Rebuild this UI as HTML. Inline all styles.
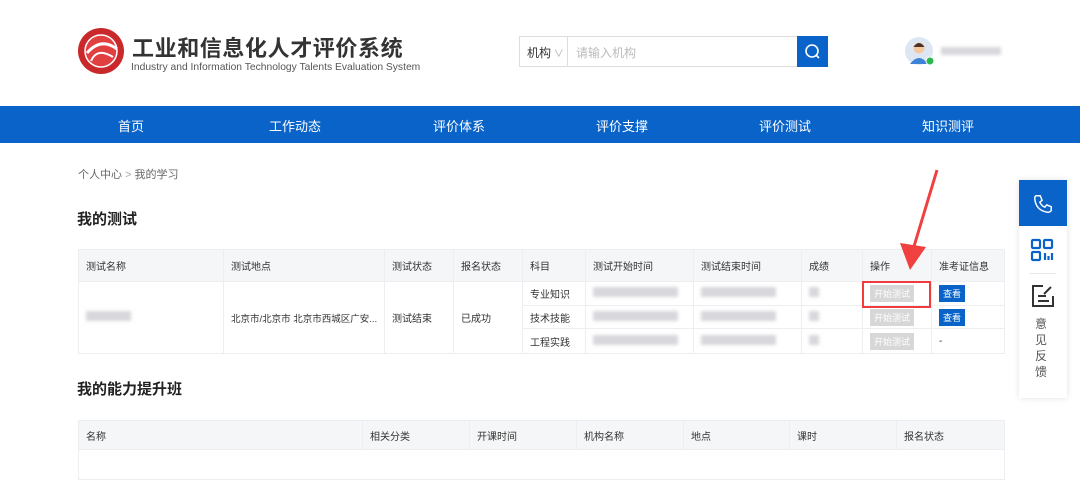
<!DOCTYPE html>
<html><head><meta charset="utf-8"><style>
*{margin:0;padding:0;box-sizing:border-box}
body{width:1080px;height:466px;overflow:hidden;background:#fff;font-family:"Liberation Sans","Noto Sans CJK SC",sans-serif;color:#333;position:relative}
.a{position:absolute}
.nav{top:106px;left:0;width:1080px;height:37px;background:#0a63c9}
.nav span{position:absolute;top:10px;color:#fff;font-size:13px;transform:translateX(-50%)}
table{border-collapse:collapse;font-size:10px;color:#333;table-layout:fixed}
td{border:1px solid #eceef2;padding-left:7px;white-space:nowrap;overflow:hidden}
th{border:1px solid #eceef2;background:#f5f6f8;text-align:left;padding-left:7px;font-weight:normal}
.blur{display:inline-block;background:#d8d8dc;filter:blur(1.5px);height:10px}
.btn{display:inline-block;background:#d7d7d7;color:#fff;font-size:9px;padding:2px 4px}
.bb{display:inline-block;background:#0a63c9;color:#fff;font-size:9px;padding:2px 4px}
</style></head><body>
<svg class="a" style="left:77px;top:27px" width="48" height="48" viewBox="0 0 48 48"><circle cx="24" cy="24" r="23" fill="#c9292b"/><circle cx="24" cy="24" r="16" fill="#e14040" stroke="#fff" stroke-width="1.5"/><path d="M10 26 Q24 10 40 22" stroke="#fff" stroke-width="3" fill="none"/><path d="M14 34 Q20 20 36 30" stroke="#fff" stroke-width="2" fill="none"/></svg>
<div class="a" style="left:132px;top:31px;font-size:22px;font-weight:bold;color:#333;letter-spacing:0.6px;white-space:nowrap">工业和信息化人才评价系统</div>
<div class="a" style="left:131px;top:62px;font-size:10.3px;color:#555;white-space:nowrap">Industry and Information Technology Talents Evaluation System</div>
<div class="a" style="left:519px;top:36px;width:280px;height:31px;border:1px solid #ddd"></div>
<div class="a" style="left:527px;top:44px;font-size:12px;color:#333">机构<span style="color:#aaa;font-size:10px"> ∨</span></div>
<div class="a" style="left:567px;top:37px;width:1px;height:29px;background:#ddd"></div>
<div class="a" style="left:576px;top:44px;font-size:12px;color:#bbb">请输入机构</div>
<div class="a" style="left:797px;top:36px;width:31px;height:31px;background:#0a63c9"></div>
<svg class="a" style="left:804px;top:43px" width="17" height="17"><circle cx="8" cy="8" r="6" stroke="#fff" stroke-width="1.6" fill="none"/><path d="M12 12l3 3" stroke="#fff" stroke-width="1.6"/></svg>
<svg class="a" style="left:905px;top:37px" width="30" height="30"><circle cx="14" cy="14" r="14" fill="#dde7f3"/><circle cx="14" cy="11" r="5.5" fill="#f5c9a0"/><path d="M8.5 10 Q14 2 19.5 10Z" fill="#4a3326"/><path d="M5 27 Q14 15 23 27Z" fill="#3c82d6"/><circle cx="25" cy="24" r="4" fill="#2db84d" stroke="#fff"/></svg>
<div class="a blur" style="left:941px;top:47px;width:60px;height:8px"></div>
<div class="a nav"><span style="left:131px">首页</span><span style="left:295px">工作动态</span><span style="left:459px">评价体系</span><span style="left:622px">评价支撑</span><span style="left:785px">评价测试</span><span style="left:948px">知识测评</span></div>
<div class="a" style="left:78px;top:166px;font-size:11px;color:#666">个人中心 <span style="color:#aaa">&gt;</span> 我的学习</div>
<div class="a" style="left:77px;top:208px;font-size:15px;font-weight:bold;color:#222">我的测试</div>
<table class="a" style="left:78px;top:249px;width:927px">
<tr style="height:32px"><th style="width:145px">测试名称</th><th style="width:161px">测试地点</th><th style="width:69px">测试状态</th><th style="width:69px">报名状态</th><th style="width:63px">科目</th><th style="width:108px">测试开始时间</th><th style="width:108px">测试结束时间</th><th style="width:61px">成绩</th><th style="width:69px">操作</th><th>准考证信息</th></tr>
<tr style="height:24px"><td rowspan="3"><span class="blur" style="width:45px"></span></td><td rowspan="3" style="font-size:9.5px">北京市/北京市 北京市西城区广安...</td><td rowspan="3">测试结束</td><td rowspan="3">已成功</td><td>专业知识</td><td><span class="blur" style="width:85px"></span></td><td><span class="blur" style="width:75px"></span></td><td><span class="blur" style="width:10px"></span></td><td><span class="btn">开始测试</span></td><td><span class="bb">查看</span></td></tr>
<tr style="height:23px"><td>技术技能</td><td><span class="blur" style="width:85px"></span></td><td><span class="blur" style="width:75px"></span></td><td><span class="blur" style="width:10px"></span></td><td><span class="btn">开始测试</span></td><td><span class="bb">查看</span></td></tr>
<tr style="height:25px"><td>工程实践</td><td><span class="blur" style="width:85px"></span></td><td><span class="blur" style="width:75px"></span></td><td><span class="blur" style="width:10px"></span></td><td><span class="btn">开始测试</span></td><td>-</td></tr>
</table>
<div class="a" style="left:862px;top:281px;width:69px;height:27px;border:2px solid #f03c3c"></div>
<svg class="a" style="left:890px;top:165px" width="55" height="110"><path d="M47 5 L22 88" stroke="#f04040" stroke-width="3"/><path d="M10 78 L20 105 L36 82Z" fill="#f04040"/></svg>
<div class="a" style="left:77px;top:378px;font-size:15px;font-weight:bold;color:#222">我的能力提升班</div>
<table class="a" style="left:78px;top:420px;width:927px">
<tr style="height:29px"><th style="width:284px">名称</th><th style="width:107px">相关分类</th><th style="width:107px">开课时间</th><th style="width:107px">机构名称</th><th style="width:106px">地点</th><th style="width:107px">课时</th><th>报名状态</th></tr>
<tr style="height:30px"><td colspan="7"></td></tr>
</table>
<div class="a" style="left:1019px;top:180px;width:48px;height:218px;background:#fff;box-shadow:0 0 6px rgba(0,0,0,.12)"></div>
<div class="a" style="left:1019px;top:180px;width:48px;height:46px;background:#0a63c9"></div>
<svg class="a" style="left:1032px;top:193px" width="22" height="22" viewBox="0 0 24 24"><path d="M5 3 L9 3 L11 8 L8.5 10 Q10.5 14 14 15.5 L16 13 L21 15 L21 19 Q20 21 17 21 Q4 19 3 6 Q3 3 5 3Z" stroke="#fff" stroke-width="1.6" fill="none"/></svg>
<svg class="a" style="left:1030px;top:238px" width="24" height="24" viewBox="0 0 24 24" fill="none" stroke="#0a63c9" stroke-width="2.2"><rect x="2" y="2" width="8" height="8" rx="1"/><rect x="14" y="2" width="8" height="8" rx="1"/><rect x="2" y="14" width="8" height="8" rx="1"/><path d="M15 15v7M18.5 18v4M22 15v7"/></svg>
<div class="a" style="left:1030px;top:273px;width:26px;height:1px;background:#e6e6e6"></div>
<svg class="a" style="left:1031px;top:284px" width="24" height="24" viewBox="0 0 24 24" fill="none" stroke="#333" stroke-width="2"><path d="M12 2H2v20h20V12"/><path d="M7 12h8M7 17h11M20 3l-7 7"/></svg>
<div class="a" style="left:1035px;top:316px;font-size:12px;line-height:16px;color:#555;width:16px">意见反馈</div>
</body></html>
